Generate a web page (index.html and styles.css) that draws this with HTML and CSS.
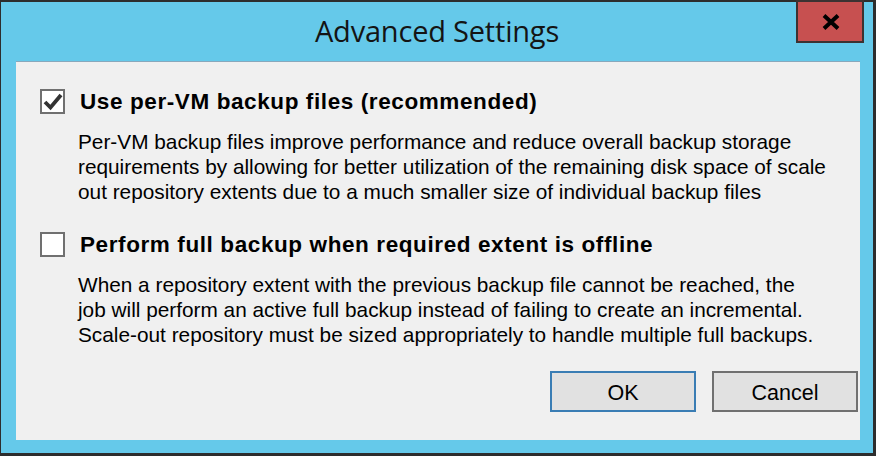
FILE: index.html
```html
<!DOCTYPE html>
<html>
<head>
<meta charset="utf-8">
<title>Advanced Settings</title>
<link rel="stylesheet" href="styles.css">
</head>
<body>
<div class="window">
  <div class="titlebar">
    <div class="spacer"></div>
    <div class="title">Advanced Settings</div>
    <div class="close-wrap">
      <div class="close">
        <svg width="18" height="16" viewBox="0 0 18 16"><path d="M2 1.5 L16 14.5 M16 1.5 L2 14.5" stroke="#000" stroke-width="4" fill="none"/></svg>
      </div>
    </div>
  </div>
  <div class="client">
    <div class="option">
      <div class="row">
        <span class="checkbox">
          <svg width="21" height="21" viewBox="0 0 21 21"><path d="M3 11 L8.5 16.5 L19 4" stroke="#333" stroke-width="3.8" fill="none"/></svg>
        </span>
        <span class="label">Use per-VM backup files (recommended)</span>
      </div>
      <p class="desc">Per-VM backup files improve performance and reduce overall backup storage<br>requirements by allowing for better utilization of the remaining disk space of scale<br>out repository extents due to a much smaller size of individual backup files</p>
    </div>
    <div class="option second">
      <div class="row">
        <span class="checkbox"></span>
        <span class="label">Perform full backup when required extent is offline</span>
      </div>
      <p class="desc">When a repository extent with the previous backup file cannot be reached, the<br>job will perform an active full backup instead of failing to create an incremental.<br>Scale-out repository must be sized appropriately to handle multiple full backups.</p>
    </div>
    <div class="buttons">
      <button class="btn default">OK</button>
      <button class="btn">Cancel</button>
    </div>
  </div>
</div>
</body>
</html>
```

FILE: styles.css
```css
html, body {
  margin: 0;
  padding: 0;
  background: #2d2d2d;
}
.window {
  width: 876px;
  height: 456px;
  box-sizing: border-box;
  border-style: solid;
  border-color: #2d2d2d;
  border-width: 2px 3px 3px 1px;
  background: #65c9ea;
  display: flex;
  flex-direction: column;
}
.titlebar {
  height: 59px;
  display: grid;
  grid-template-columns: 1fr auto 1fr;
}
.title {
  font-family: "Open Sans", sans-serif;
  font-size: 29px;
  color: #141414;
  line-height: 57px;
  letter-spacing: -0.2px;
}
.close-wrap {
  display: flex;
  justify-content: flex-end;
  align-items: flex-start;
  padding-right: 9px;
}
.close {
  margin-top: -2px;
  width: 68px;
  height: 43px;
  box-sizing: border-box;
  background: #c75050;
  border: 2px solid #3c3232;
  display: flex;
  align-items: center;
  justify-content: center;
  padding-left: 2px;
}
.client {
  flex: 1;
  margin: 0 13px 13px 15px;
  background: #f0f0f0;
  border-top: 1px solid #88a8bc;
  padding: 27px 2px 0 24px;
  font-family: "Liberation Sans", Arial, sans-serif;
  color: #000;
}
.option.second {
  margin-top: 28px;
}
.row {
  display: flex;
  align-items: flex-start;
  gap: 15px;
}
.checkbox {
  width: 25px;
  height: 25px;
  box-sizing: border-box;
  border: 2px solid #707070;
  background: #fff;
  display: flex;
  align-items: center;
  justify-content: center;
  flex: none;
}
.label {
  font-weight: bold;
  font-size: 22.5px;
  letter-spacing: 0.6px;
  line-height: 25px;
}
.desc {
  margin: 15px 0 0 38px;
  font-size: 20.8px;
  line-height: 25px;
}
.buttons {
  margin-top: 24px;
  display: flex;
  justify-content: flex-end;
  gap: 16px;
}
.btn {
  width: 146px;
  height: 41px;
  box-sizing: border-box;
  background: #e1e1e1;
  border: 2px solid #707070;
  font-family: "Liberation Sans", Arial, sans-serif;
  font-size: 21.5px;
  color: #000;
  padding: 4px 0 0 0;
}
.btn.default {
  border-color: #3a7db4;
}
```
